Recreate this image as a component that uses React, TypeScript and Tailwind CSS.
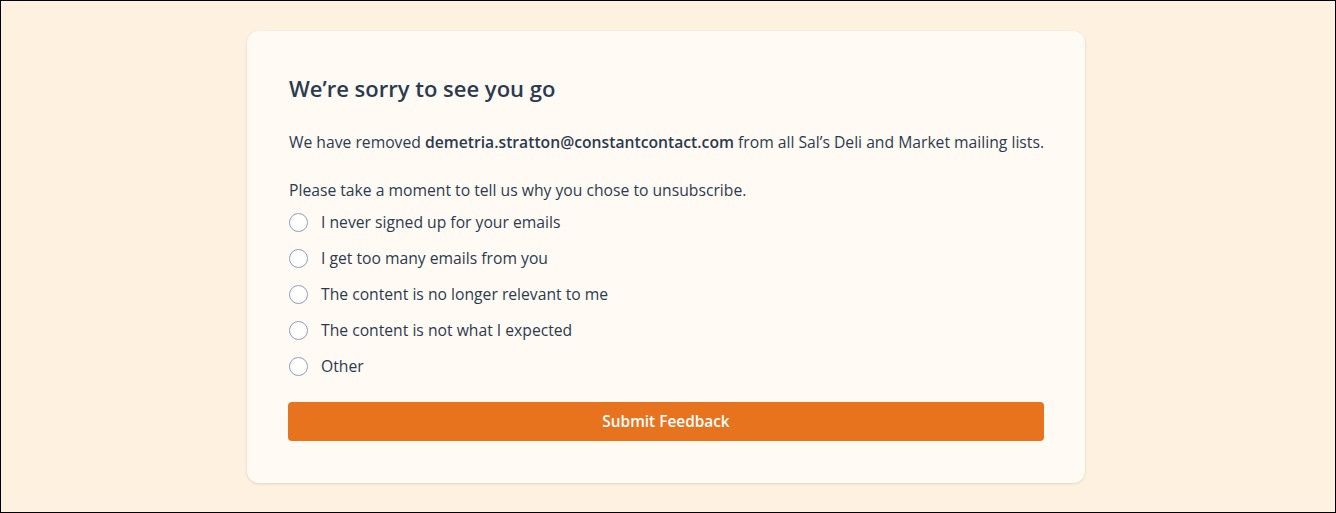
const reasons = [
  "I never signed up for your emails",
  "I get too many emails from you",
  "The content is no longer relevant to me",
  "The content is not what I expected",
  "Other",
];

export default function App() {
  return (
    <div
      className="h-[513px] w-full border border-black bg-[#fef1df] pt-[30px] pl-[246px] text-[#2c3a50]"
      style={{ fontFamily: "'Open Sans', Lato, sans-serif" }}
    >
      <div className="w-[838px] h-[452px] bg-[#fffbf4] rounded-xl shadow-[0_1px_3px_rgba(0,0,0,0.12)] px-[41px] pt-[42px]">
        <h1 className="text-[22px] font-semibold leading-[30px] pl-px">
          We’re sorry to see you go
        </h1>

        {/* Message */}
        <p className="mt-[28px] text-[15.7px] leading-[22px] pl-px">
          We have removed{" "}
          <span className="font-semibold">demetria.stratton@constantcontact.com</span>{" "}
          from all Sal’s Deli and Market mailing lists.
        </p>

        <p className="mt-[26px] text-[15.7px] leading-[22px] pl-px">
          Please take a moment to tell us why you chose to unsubscribe.
        </p>

        {/* Reasons */}
        <div className="mt-[3px] flex flex-col">
          {reasons.map((r) => (
            <label key={r} className="flex items-center h-[36px] gap-[13px] pl-px cursor-pointer">
              <span className="w-[19px] h-[19px] rounded-full border border-[#8f9cb8] bg-white shrink-0" />
              <span className="text-[15.7px] pt-px">{r}</span>
            </label>
          ))}
        </div>

        <button className="mt-[18px] w-full h-[39px] rounded bg-[#e8731f] text-white text-[15.4px] font-semibold">
          Submit Feedback
        </button>
      </div>
    </div>
  );
}
